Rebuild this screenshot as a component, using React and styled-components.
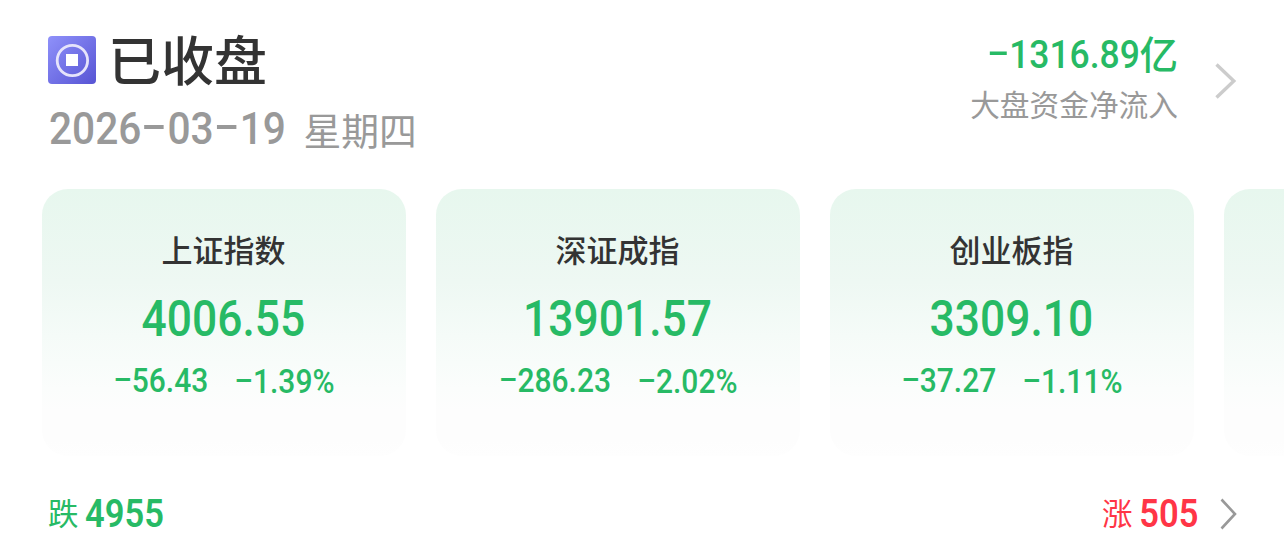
import React from 'react';
import styled, { createGlobalStyle } from 'styled-components';

const GlobalStyle = createGlobalStyle`
  * { box-sizing: border-box; }
  body {
    margin: 0;
    background: #fff;
    overflow: hidden;
    font-family: Roboto, 'Noto Sans CJK SC', sans-serif;
  }
`;

const colors = { down: '#27ba65', up: '#ff3546', ink: '#333333', muted: '#999999' };

const Page = styled.main`
  width: 1284px;
  height: 535px;
  overflow: hidden;
  background: #fff;
`;

const Header = styled.header`
  display: flex;
  justify-content: space-between;
  height: 189px;
  padding: 30px 46px 0 48px;
`;

const Status = styled.div`
  display: flex;
  flex-direction: column;
`;

const TitleRow = styled.div`
  display: flex;
  align-items: center;
  gap: 12px;
  height: 60px;
`;

const Title = styled.h1`
  margin: 0 0 4px;
  font: 500 53px/60px 'Noto Sans CJK SC', sans-serif;
  color: ${colors.ink};
`;

const DateRow = styled.div`
  display: flex;
  align-items: center;
  height: 60px;
  margin-top: 10px;
  padding-left: 1px;
  color: ${colors.muted};
`;

const Weekday = styled.span`
  font: 400 37.8px/56px 'Noto Sans CJK SC', sans-serif;
  margin: 0 0 2px -3px;
`;

const Flow = styled.div`
  display: flex;
  align-items: center;
  gap: 36px;
  height: 102px;
`;

const FlowText = styled.div`
  display: flex;
  flex-direction: column;
  align-items: flex-end;
`;

const FlowAmount = styled.div`
  display: flex;
  align-items: center;
  height: 48px;
  color: ${colors.down};
`;

const Unit = styled.span`
  font: 500 38.5px/42px 'Noto Sans CJK SC', sans-serif;
  margin-bottom: 6px;
`;

const FlowLabel = styled.div`
  height: 52px;
  font: 400 29.7px/50px 'Noto Sans CJK SC', sans-serif;
  color: ${colors.muted};
`;

const Figure = styled.span`
  display: inline-block;
  flex: none;
  white-space: nowrap;
  font-family: Roboto, sans-serif;
  font-weight: ${(p) => p.$weight || 500};
  font-size: ${(p) => p.$size}px;
  line-height: ${(p) => p.$line || 1.2};
  transform: scaleX(${(p) => p.$scale || 0.925});
  transform-origin: ${(p) => p.$origin || 'center'};
`;

const Dash = styled.span`
  display: inline-block;
  width: ${(p) => p.$width || 0.6}em;
  text-align: center;
  transform: translateY(-0.065em) scale(1.85, 0.95);
`;

const Cards = styled.section`
  display: flex;
  gap: 30px;
  padding-left: 42px;
`;

const Card = styled.article`
  flex: none;
  display: flex;
  flex-direction: column;
  align-items: center;
  width: 364px;
  height: 267px;
  padding-top: 39px;
  border-radius: 26px;
  background: linear-gradient(180deg, #e7f7ee 0%, #eef8f3 35%, #f5fbf8 55%, #fbfdfc 75%, #fdfdfd 83%, #fdfdfd 94%, #fefefe 100%);
`;

const CardName = styled.h2`
  margin: 0;
  padding-right: 1px;
  font: 500 31px/42px 'Noto Sans CJK SC', sans-serif;
  color: ${colors.ink};
`;

const CardValue = styled.div`
  display: flex;
  align-items: center;
  height: 60px;
  margin-top: 20px;
  padding-right: 1px;
  color: ${colors.down};
`;

const CardChange = styled.div`
  display: flex;
  justify-content: center;
  gap: 19px;
  height: 40px;
  margin-top: 12px;
  color: ${colors.down};
`;

const Percent = styled.span`
  padding-top: 1px;
`;

const Footer = styled.footer`
  display: flex;
  align-items: center;
  justify-content: space-between;
  height: 42px;
  margin-top: 37px;
  padding: 0 46px 0 48px;
`;

const Count = styled.div`
  display: flex;
  align-items: center;
  height: 42px;
  color: ${(p) => colors[p.$tone]};
`;

const CountLabel = styled.span`
  font: 400 30.5px/38px 'Noto Sans CJK SC', sans-serif;
  margin: 0 ${(p) => p.$gap}px 4px 0;
`;

const FooterEnd = styled.div`
  display: flex;
  align-items: center;
  gap: 21px;
`;

const Num = ({ children, $dash, ...rest }) => (
  <Figure {...rest}>
    {children.split(/(-)/).map((part, i) => (part === '-' ? <Dash key={i} $width={$dash}>-</Dash> : part))}
  </Figure>
);

const CoinIcon = () => (
  <svg width="48" height="48" viewBox="0 0 48 48">
    <defs>
      <linearGradient id="coin" x1="0" y1="0" x2="1" y2="1">
        <stop offset="0" stopColor="#8f91fa" />
        <stop offset="1" stopColor="#5754d4" />
      </linearGradient>
    </defs>
    <rect width="48" height="48" rx="4" fill="url(#coin)" />
    <circle cx="24.4" cy="24.5" r="15.2" fill="none" stroke="#e6e4fb" strokeWidth="2.8" />
    <rect x="18" y="18" width="12" height="12" fill="#fff" />
  </svg>
);

const indices = [
  { name: '上证指数', value: '4006.55', change: '-56.43', percent: '-1.39%' },
  { name: '深证成指', value: '13901.57', change: '-286.23', percent: '-2.02%' },
  { name: '创业板指', value: '3309.10', change: '-37.27', percent: '-1.11%' },
];

export default function App() {
  return (
    <Page>
      <GlobalStyle />
      <Header>
        <Status>
          <TitleRow>
            <CoinIcon />
            <Title>已收盘</Title>
          </TitleRow>
          <DateRow>
            <Num $size={44.2} $origin="left" $scale={0.92} $dash={0.64}>2026-03-19</Num>
            <Weekday>星期四</Weekday>
          </DateRow>
        </Status>
        <Flow>
          <FlowText>
            <FlowAmount>
              <Num $size={39.4} $origin="right" $scale={0.9}>-1316.89</Num>
              <Unit>亿</Unit>
            </FlowAmount>
            <FlowLabel>大盘资金净流入</FlowLabel>
          </FlowText>
          <svg width="24" height="38" viewBox="0 0 24 38" fill="none" stroke="#cccccc" strokeWidth="3.4">
            <path d="M2.5 2.5 19.8 19 2.5 35.5" />
          </svg>
        </Flow>
      </Header>
      <Cards>
        {indices.map((item) => (
          <Card key={item.name}>
            <CardName>{item.name}</CardName>
            <CardValue><Num $size={49.6} $scale={0.895}>{item.value}</Num></CardValue>
            <CardChange>
              <Num $size={32.4}>{item.change}</Num>
              <Percent><Num $size={32.4}>{item.percent}</Num></Percent>
            </CardChange>
          </Card>
        ))}
        <Card />
      </Cards>
      <Footer>
        <Count $tone="down">
          <CountLabel $gap={6}>跌</CountLabel>
          <Num $size={38.8} $weight={600} $origin="left" $scale={0.89} $line="42px">4955</Num>
        </Count>
        <FooterEnd>
          <Count $tone="up">
            <CountLabel $gap={-1}>涨</CountLabel>
            <Num $size={38.8} $weight={600} $origin="right" $scale={0.89} $line="42px">505</Num>
          </Count>
          <svg width="19" height="34" viewBox="0 0 19 34" fill="none" stroke="#999999" strokeWidth="2.6">
            <path d="M2.5 2.5 16 17 2.5 31.5" />
          </svg>
        </FooterEnd>
      </Footer>
    </Page>
  );
}
